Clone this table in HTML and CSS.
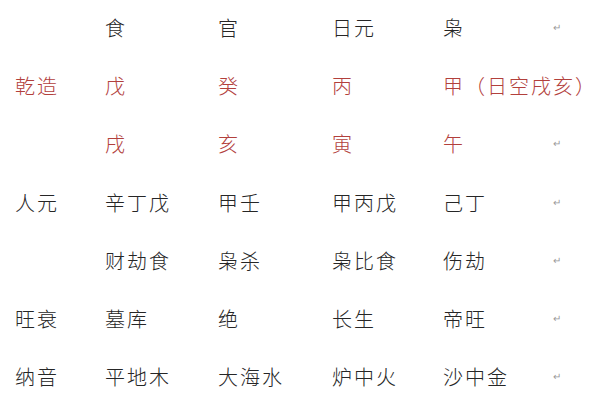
FILE: index.html
```html
<!DOCTYPE html>
<html lang="zh">
<head>
<meta charset="utf-8">
<link rel="stylesheet" href="styles.css">
</head>
<body>
<div class="chart">
  <div class="row">
    <span class="c"></span><span class="c">食</span><span class="c">官</span><span class="c">日元</span><span class="c">枭</span><span class="ret">↵</span>
  </div>
  <div class="row red">
    <span class="c">乾造</span><span class="c">戊</span><span class="c">癸</span><span class="c">丙</span><span class="c wide">甲（日空戌亥）</span>
  </div>
  <div class="row red">
    <span class="c"></span><span class="c">戌</span><span class="c">亥</span><span class="c">寅</span><span class="c">午</span><span class="ret">↵</span>
  </div>
  <div class="row">
    <span class="c">人元</span><span class="c">辛丁戊</span><span class="c">甲壬</span><span class="c">甲丙戊</span><span class="c">己丁</span><span class="ret">↵</span>
  </div>
  <div class="row">
    <span class="c"></span><span class="c">财劫食</span><span class="c">枭杀</span><span class="c">枭比食</span><span class="c">伤劫</span><span class="ret">↵</span>
  </div>
  <div class="row">
    <span class="c">旺衰</span><span class="c">墓库</span><span class="c">绝</span><span class="c">长生</span><span class="c">帝旺</span><span class="ret">↵</span>
  </div>
  <div class="row">
    <span class="c">纳音</span><span class="c">平地木</span><span class="c">大海水</span><span class="c">炉中火</span><span class="c">沙中金</span><span class="ret">↵</span>
  </div>
</div>
</body>
</html>
```
FILE: styles.css
```css
html, body {
  margin: 0;
  padding: 0;
  background: #ffffff;
}
body {
  font-family: "Noto Sans CJK SC", sans-serif;
  color: #262626;
  overflow: hidden;
  width: 600px;
  height: 400px;
}
.chart {
  display: flex;
  flex-direction: column;
  padding-left: 15px;
  margin-top: -2px;
}
.row {
  display: grid;
  grid-template-columns: 90px 113px 114px 111px 110px 40px;
  height: 58.3px;
  align-items: center;
  font-size: 20px;
  font-weight: 300;
  letter-spacing: 2px;
  white-space: nowrap;
}
.red {
  color: #b2403c;
}
.wide {
  grid-column: span 2;
}
.ret {
  font-size: 10px;
  color: #9a9a9a;
  letter-spacing: 0;
  font-family: "DejaVu Sans", sans-serif;
}
```
